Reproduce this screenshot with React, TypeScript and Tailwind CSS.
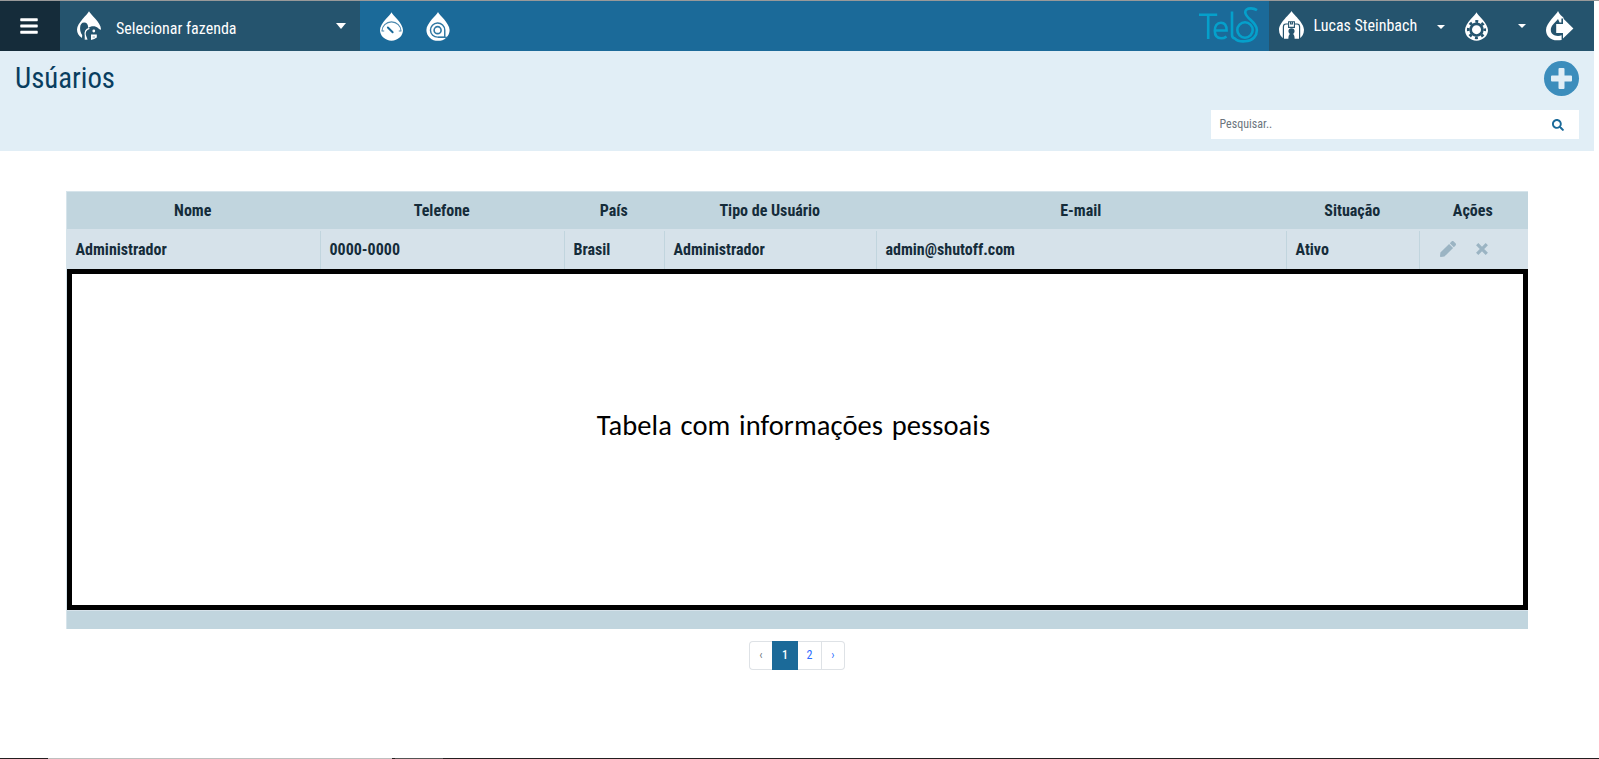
import React from "react";
import { FaBars, FaPen, FaSearch } from "react-icons/fa";

const DROP = "M12 0C12.8 2.6 24 11.5 24 18.6A12 11.2 0 0 1 0 18.6C0 11.5 11.2 2.6 12 0Z";

function FarmIcon() {
  return (
    <svg width="24" height="30" viewBox="0 0 24 30" fill="none">
      <path
        d="M12 .3C13 3.2 24 11.6 24 18.2C24 19.2 22.6 18.6 21 17C18.5 14.6 14 14.6 11.2 17C11.2 13.4 9.6 11.6 7.2 11.6C4.6 11.6 3.2 13.6 3.1 17C3 20 4 22.4 5.2 24L5 27C1.6 24.8 0 22 0 18.6C0 12 11 3.2 12 .3Z"
        fill="#fff"
      />
      <path d="M8.3 28.8V25C7.6 21.6 8.6 18.4 12.4 17.4M8.4 24.4L10 28.8" stroke="#fff" strokeWidth="1.1" />
      <path d="M14 29V23.6H19.8V26.6Q17.6 28.6 14 29Z" fill="#fff" />
      <circle cx="16.8" cy="20" r="1.4" fill="#fff" />
      <path d="M15.6 26H18" stroke="#8aa7b6" strokeWidth="1" />
    </svg>
  );
}

function GaugeIcon() {
  return (
    <svg width="23" height="29" viewBox="0 0 24 30" fill="none">
      <path d={DROP} fill="#fff" />
      <path d="M2 19.8A10 9.6 0 0 1 22 19.8M1.6 19.6H4.4M19.6 19.6H22.4" stroke="#4a88ae" strokeWidth="1.1" />
      <path d="M8.2 16L13.2 21" stroke="#1b6a99" strokeWidth="2" strokeLinecap="round" />
    </svg>
  );
}

function ReelIcon() {
  return (
    <svg width="24" height="29" viewBox="0 0 24 30" fill="none">
      <path d={DROP} fill="#fff" />
      <path d="M19 18.6V26H11.8A7.4 7.3 0 1 1 19 18.6" stroke="#2f78a3" strokeWidth="1.5" />
      <path d="M12 26.2H22" stroke="#2f78a3" strokeWidth="1.2" />
      <circle cx="11.6" cy="18.8" r="3.6" stroke="#2f78a3" strokeWidth="1.7" />
    </svg>
  );
}

function UserIcon() {
  return (
    <svg width="25" height="30" viewBox="0 0 25 30" fill="none">
      <path d="M12.5 0C13.4 2.6 25 11.5 25 18.8C25 23 23 26 20 27.8L5 27.8C2 26 0 23 0 18.8C0 11.5 11.7 2.6 12.5 0Z" fill="#fff" />
      <path d="M4.4 28V15.8Q4.4 13 7 13H9M20.6 28V15.8Q20.6 13 18 13H16" stroke="#25546e" strokeWidth="1.2" />
      <path d="M9.6 10.7H15.4V16.4H9.6ZM11.6 10.8V13H13.4V10.8" stroke="#25546e" strokeWidth="1.1" />
      <path d="M9.4 20.3A3.1 3.1 0 1 1 15.6 20.3Q15.4 22.2 14 23Q16 24 15.6 30H9.4Q9 24 11 23Q9.6 22.2 9.4 20.3Z" fill="#25546e" />
    </svg>
  );
}

function SettingsIcon() {
  return (
    <svg width="23" height="29" viewBox="0 0 24 30" fill="none">
      <path d={DROP} fill="#fff" />
      <circle cx="12" cy="18.3" r="6.1" stroke="#25546e" strokeWidth="2.8" />
      <circle cx="12" cy="18.3" r="8.6" stroke="#25546e" strokeWidth="2.8" strokeDasharray="3.1 3.654" strokeDashoffset="1.55" />
    </svg>
  );
}

function ExitIcon() {
  return (
    <svg width="28" height="30" viewBox="0 0 28 30" fill="none">
      <path
        d="M12 0C13.2 3.2 16.2 5.4 18.2 7.4H15.4V11.4H13.6L12 8C9.5 11.4 4.8 14.4 4.8 18.8C4.8 22.8 7.8 25 12 25C13.4 25 14.6 24.6 15.6 24.2V28.9C5.6 31 0 25.8 0 19C0 11.6 11 3.4 12 0Z"
        fill="#fff"
      />
      <path d="M10.2 13H17V7.2L27.4 17.4L17 27.4V22H10.2Z" fill="#fff" />
    </svg>
  );
}

function TelosLogo() {
  return (
    <svg width="60" height="36" viewBox="0 0 60 36" fill="none" stroke="#05a0cb" strokeWidth="2.6">
      <path d="M0 7.7H18.2M9.2 7.7V32" />
      <path d="M16 23.5H27.6C27.6 18.4 25.5 15.8 21.9 15.8C18 15.8 15.8 19.3 15.8 23.8C15.8 28.8 18.4 31.3 22.2 31.3C24.4 31.3 26 30.6 27.5 29.4" />
      <path d="M33 4.5V28Q33 31 36 31.6C38 33.8 41.5 34.6 46 34.3C54 33.8 58.3 28.6 57.8 22.5C57.3 15 48 12 46.5 6.5C45.5 2.6 48.5 1.4 52 1.4C54.5 1.4 56.2 2 58 3.2" />
      <ellipse cx="46" cy="23" rx="7.7" ry="7.7" />
    </svg>
  );
}

function PlusIcon() {
  return (
    <svg width="21" height="21" viewBox="0 0 21 21" fill="currentColor">
      <path d="M8.5 0H12.5Q13.5 0 13.5 1V7.5H20Q21 7.5 21 8.5V12.5Q21 13.5 20 13.5H13.5V20Q13.5 21 12.5 21H8.5Q7.5 21 7.5 20V13.5H1Q0 13.5 0 12.5V8.5Q0 7.5 1 7.5H7.5V1Q7.5 0 8.5 0Z" />
    </svg>
  );
}

function CrossIcon() {
  return (
    <svg width="12" height="12" viewBox="0 0 12 12" fill="none" stroke="currentColor" strokeWidth="3.2">
      <path d="M1.2 1.2L10.8 10.8M10.8 1.2L1.2 10.8" />
    </svg>
  );
}

function Caret({ className = "" }: { className?: string }) {
  return <span className={`block h-0 w-0 border-x-transparent border-t-white ${className}`} />;
}

const COLUMNS = "grid grid-cols-[254px_244px_100px_212px_410px_133px_108px]";
const HEADINGS = ["Nome", "Telefone", "País", "Tipo de Usuário", "E-mail", "Situação", "Ações"];
const ROW = ["Administrador", "0000-0000", "Brasil", "Administrador", "admin@shutoff.com", "Ativo"];

export default function App() {
  return (
    <div className="flex h-[759px] w-[1599px] flex-col overflow-hidden bg-white font-['Roboto_Condensed',Roboto,sans-serif] text-base text-[#152c3a]">
      <div className="h-px shrink-0 bg-[#999]" />
      <nav className="flex h-[50px] w-[1594px] shrink-0 bg-[#1b6a99] text-white">
        <button className="flex w-[60px] items-start justify-center bg-[#152c3a] pr-[2px] pt-[15px]">
          <FaBars size={20} />
        </button>
        <button className="flex w-[300px] items-start bg-[#25546e] pl-[17px] pt-[10px]">
          <FarmIcon />
          <span className="ml-[15px] mt-[6px] leading-6">Selecionar fazenda</span>
          <Caret className="ml-auto mr-[14px] mt-[12px] border-x-[5.5px] border-t-[6px]" />
        </button>
        <div className="flex pl-[20px] pt-[11px]">
          <GaugeIcon />
          <span className="ml-[23px]">
            <ReelIcon />
          </span>
        </div>
        <div className="ml-auto mr-[10px] mt-[6px]">
          <TelosLogo />
        </div>
        <div className="flex w-[325px] items-start bg-[#25546e] pl-[10px] pt-[10px]">
          <UserIcon />
          <span className="ml-[9.5px] mt-[3px] w-[123.5px] leading-6">Lucas Steinbach</span>
          <Caret className="mt-[14px] border-x-[4px] border-t-[4px]" />
          <span className="ml-[20px] mt-px">
            <SettingsIcon />
          </span>
          <Caret className="ml-[30px] mt-[13px] border-x-[4px] border-t-[4px]" />
          <span className="ml-[20px] shrink-0">
            <ExitIcon />
          </span>
        </div>
      </nav>
      <header className="flex h-[100px] w-[1594px] shrink-0 justify-between bg-[#e1eef6] px-[15px]">
        <h1 className="pt-[9px] text-[28.8px] leading-9 text-[#093e60]">Usúarios</h1>
        <div className="flex flex-col items-end pt-[10px]">
          <button className="flex h-[35px] w-[35px] items-center justify-center rounded-full bg-[#3c8dbc] text-[#e1eef6]">
            <PlusIcon />
          </button>
          <div className="mt-[14px] flex h-[29px] w-[368px] items-center justify-between bg-white pl-[8.5px] pr-[15px]">
            <span className="pb-px text-xs text-[#6c757d]">Pesquisar..</span>
            <FaSearch size={12} color="#1b6a99" />
          </div>
        </div>
      </header>
      <main className="mt-[40px] flex flex-col pl-[66px]">
        <div className="w-[1462px] border-l border-t border-[#d6e4eb]">
          <div className={`${COLUMNS} h-[37px] bg-[#c1d5de]`}>
            {HEADINGS.map((h) => (
              <div key={h} className="pr-[2.5px] text-center font-bold leading-[37px]">
                {h}
              </div>
            ))}
          </div>
          <div className={`${COLUMNS} h-[40px] bg-[#d6e2ea] pt-[2px]`}>
            {ROW.map((c, i) => (
              <div key={i} className="border-r border-[#c1d5de] pl-[8.5px] font-bold leading-[37px]">
                {c}
              </div>
            ))}
            <div className="flex items-center gap-[20px] pb-[2px] pl-[20px] text-[#9bb4c3]">
              <FaPen size={16} />
              <CrossIcon />
            </div>
          </div>
          <div className="flex h-[341px] items-center justify-center border-[5px] border-black pb-[26px] pr-[8px] font-[Carlito,Lato,sans-serif] text-[28.5px] text-black [letter-spacing:0.1px] [word-spacing:2px]">
            Tabela com informações pessoais
          </div>
          <div className="h-[19px] border-t border-[#d6e2ea] bg-[#c1d5de]" />
        </div>
        <div className="ml-[683px] mt-[12px] flex h-[29px] w-[96px] text-center text-xs leading-[27px]">
          <span className="w-[23px] rounded-l border border-r-0 border-[#dee2e6] text-[#6c757d]">‹</span>
          <span className="w-[26px] bg-[#1b6a99] font-medium leading-[28px] text-white">1</span>
          <span className="w-[24px] border border-l-0 border-[#dee2e6] text-[#2b6bff]">2</span>
          <span className="w-[23px] rounded-r border border-l-0 border-[#dee2e6] text-[#2b6bff]">›</span>
        </div>
      </main>
      <div className="mt-auto flex h-px shrink-0 bg-[#231f20]">
        <div className="ml-[48px] w-[344px] bg-[#bfbfbf]" />
        <div className="ml-[3px] w-[48px] bg-[#555]" />
      </div>
    </div>
  );
}
